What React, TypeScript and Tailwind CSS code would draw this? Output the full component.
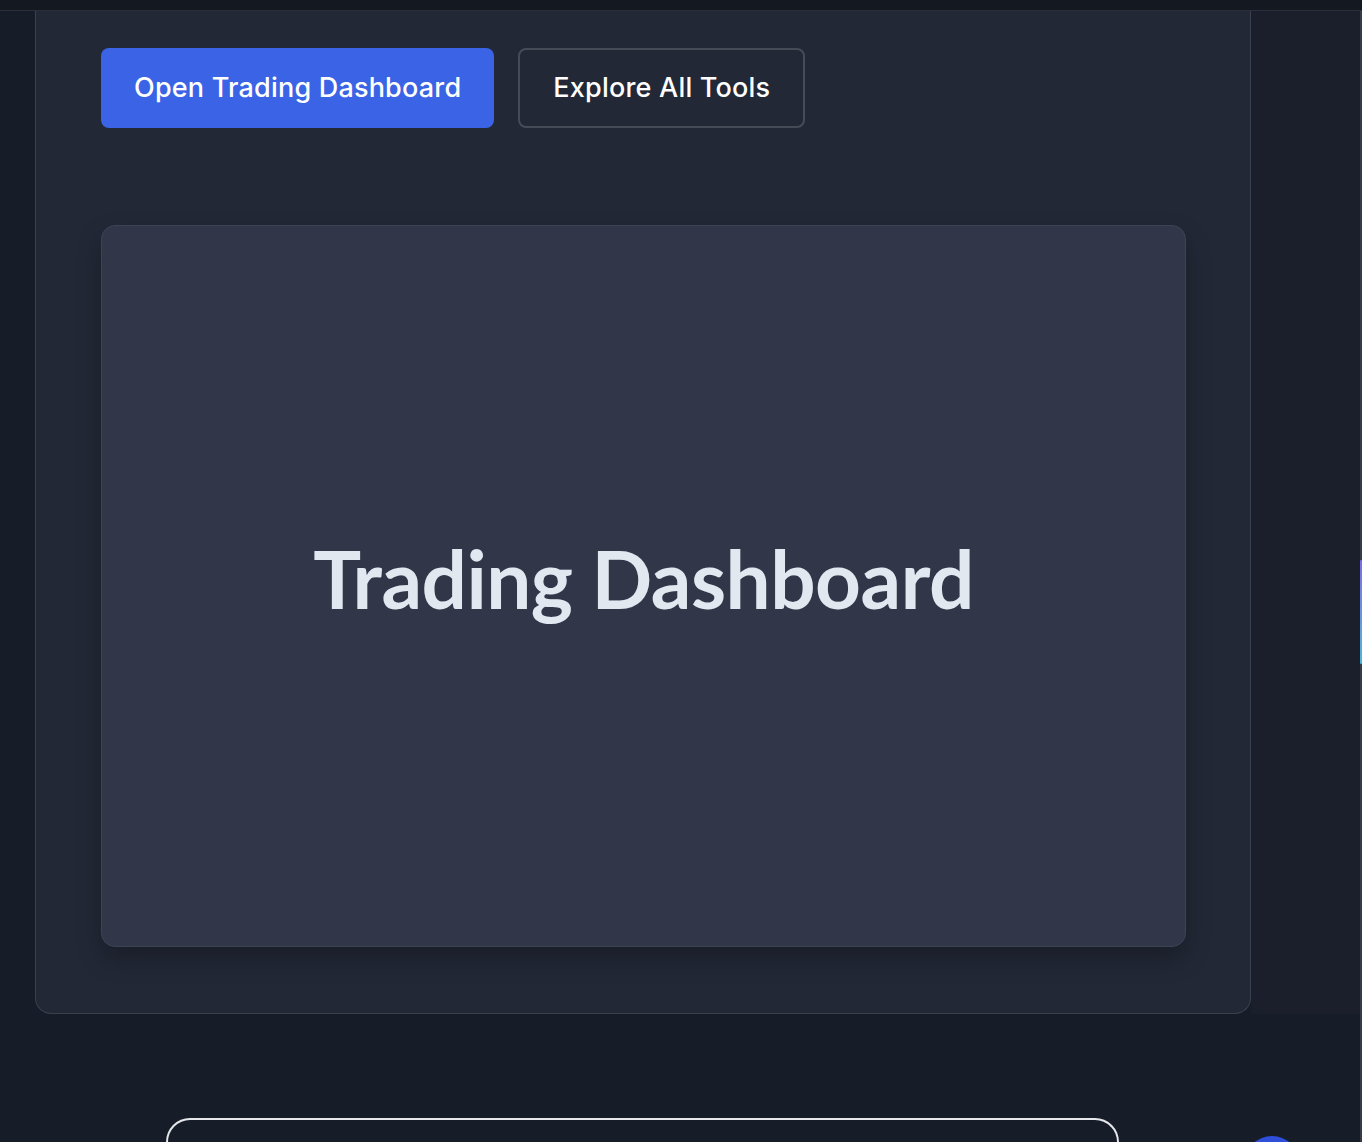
import React from 'react'

const Header = () => (
  <div className="h-[11px] bg-[#141821] border-b border-[#2a303b]" />
)

const ActionButtons = () => (
  <div className="flex gap-6">
    <button className="h-20 px-[33px] rounded-lg bg-[#3a64e5] text-white text-[27px] font-medium tracking-[0.2px]">
      Open Trading Dashboard
    </button>
    <button className="h-20 px-[33px] rounded-lg border-2 border-[#454b57] text-white text-[27px] font-medium tracking-[0.2px]">
      Explore All Tools
    </button>
  </div>
)

const Preview = () => (
  <div className="mt-[97px] h-[722px] pb-[16px] rounded-[14px] border border-[#3c4355] bg-[#313749] shadow-[0_12px_24px_rgba(0,0,0,0.25)] flex items-center justify-center">
    <h2 className="text-[#e2e8f0] text-[80px] font-bold tracking-[-0.5px]" style={{ fontFamily: 'Lato, sans-serif' }}>
      Trading Dashboard
    </h2>
  </div>
)

export default function App() {
  return (
    <div className="relative h-[1142px] overflow-hidden bg-[#171c29]" style={{ fontFamily: 'Inter, "Noto Sans", sans-serif' }}>
      <Header />
      <div className="flex">
        <div className="ml-[35px] w-[1216px] rounded-b-[16px] border-x border-b border-[#3a404d] bg-[#222836] pt-[37px] pb-[66px] pl-[65px] pr-[64px]">
          <ActionButtons />
          <Preview />
        </div>
        <div className="flex-1 bg-[#1a1f2b]" />
      </div>

      <div className="mt-[104px] ml-[166px] w-[953px] h-[40px] rounded-t-[24px] border-2 border-b-0 border-[#e5e7eb] bg-[#171c29]" />

      {/* scroll indicator */}
      <div className="absolute right-0 top-[11px] bottom-0 w-[2px] bg-[#363b46]" />
      <div className="absolute right-0 top-[560px] h-[104px] w-[2px] rounded-full bg-gradient-to-b from-[#7a6be6] to-[#4cb6d6]" />

      {/* chat bubble */}
      <div className="absolute left-[1244px] top-[1136px] h-14 w-14 rounded-full bg-[#2d4fd9]" />
    </div>
  )
}
